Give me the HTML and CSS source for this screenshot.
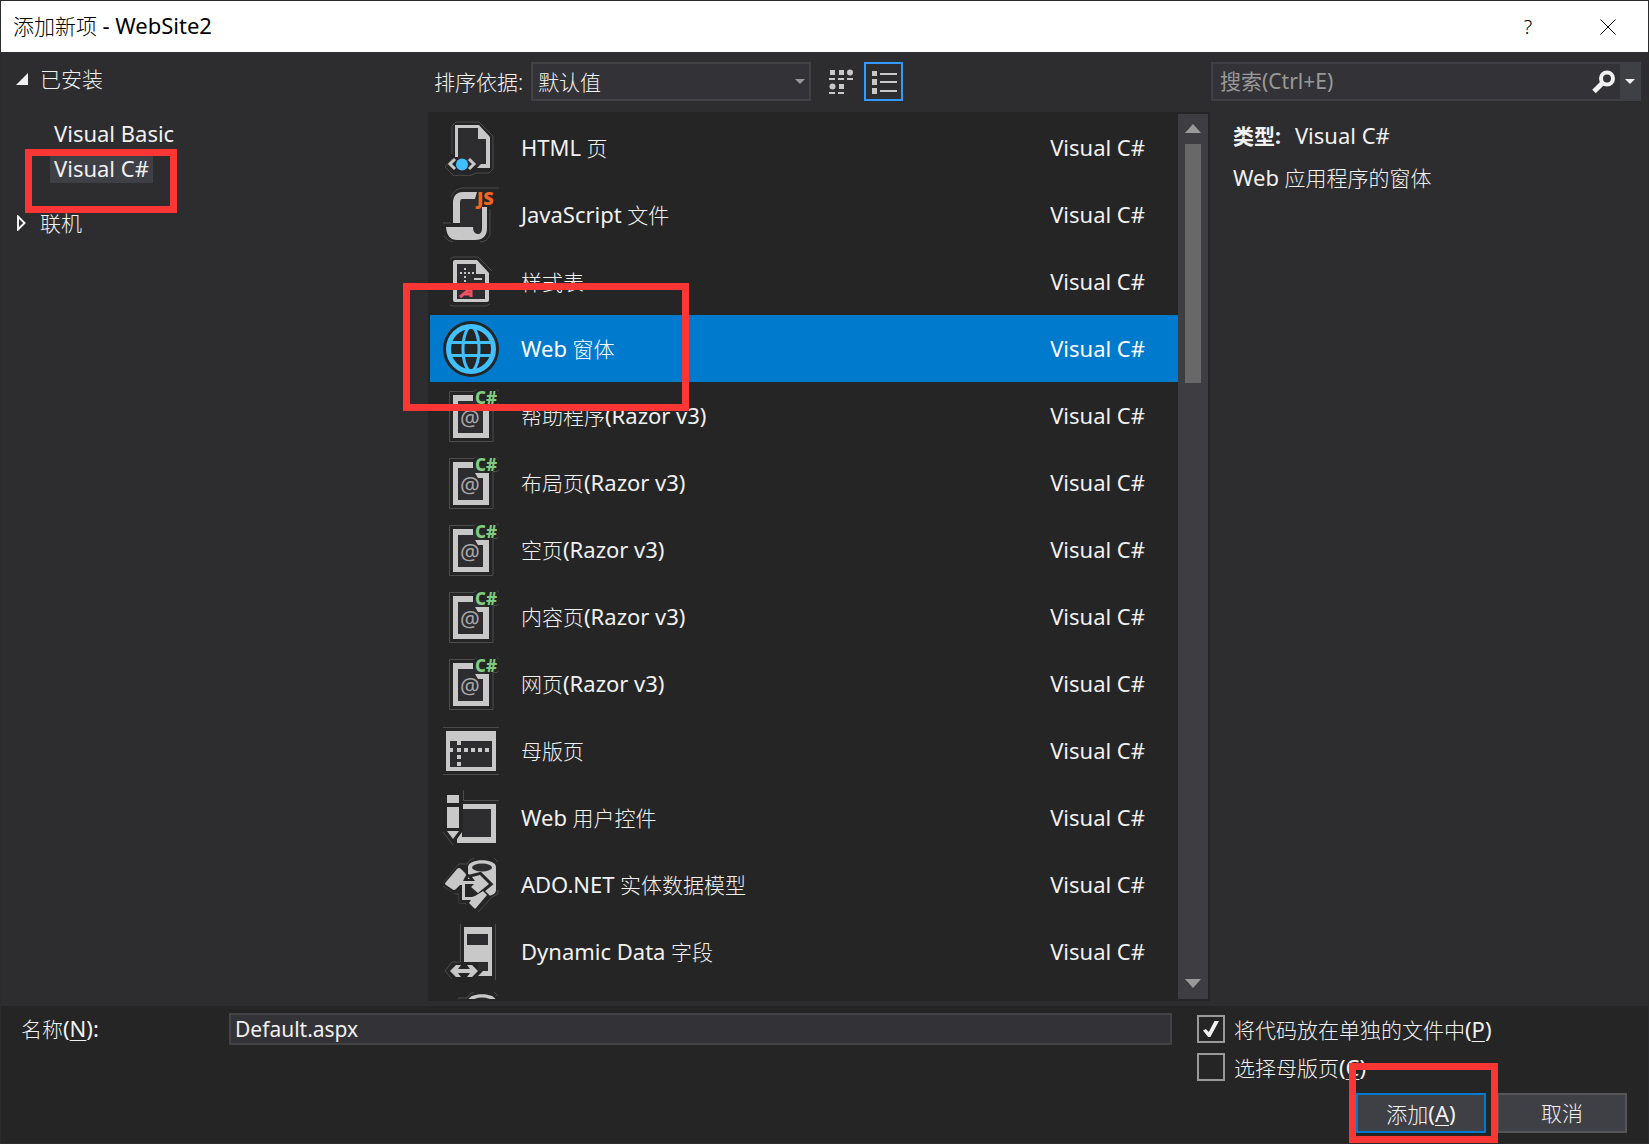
FILE: index.html
```html
<!DOCTYPE html>
<html lang="zh-CN">
<head>
<meta charset="utf-8">
<title>添加新项 - WebSite2</title>
<link rel="stylesheet" href="styles.css">
</head>
<body>
<svg class="sprite" aria-hidden="true">
  <symbol id="razor" viewBox="0 0 56 56">
    <path class="halo" d="M31 3.500H6.500v50h43.500V16.500h4l2-2M31 3.500l2-2M54 1.500l2 2"/>
    <path class="dark" d="M14 11h28v36H14z"/>
    <path class="light" d="M10 7h20v6H15v32h25V23h-5l-3-5h14v32H10z"/>
    <text class="at" x="17" y="38">@</text>
    <text class="cs" x="32" y="16">C#</text>
  </symbol>
  <symbol id="database" viewBox="0 0 56 56">
    <path class="halo" d="M0 26L16 7h8l3-4 4-2M51 1l4 4M0 29l12 8h4v9h6l9 9M35 55l14-15 6-3v-4"/>
    <path class="light" d="M25 10c0-9 28-9 28 0v23c0 4-5 6-10 6L25 22z"/>
    <ellipse class="dark" cx="39" cy="10.500" rx="10" ry="4"/>
    <g class="edge"><path d="M3 27l12-14 8 6-12 14zM19 25h12l-2-5 8-2 9 9-11 9-7-6zM19 26v17h9l12-7 4 4-12 13-5-5z"/></g>
    <path class="light" d="M3 25l11-13q2-2 4 0l4 4q2 2 0 4l-2 4h12l-3-4 4-1 4-1 9 9-11 9-7-6 3-3h-9v13h7l3-1 8-5 4 4-11 13q-1 1-2 0l-5-5 2-3h-9V28h-2l-4 4q-2 2-4 0l-6-4q-2-1 0-3z"/>
  </symbol>
</svg>
<div class="dialog">
  <header class="titlebar">
    <h1>添加新项 <span lang="en">- WebSite2</span></h1>
    <button type="button" class="caption" aria-label="帮助">?</button>
    <button type="button" class="caption" aria-label="关闭"><svg width="16" height="16" viewBox="0 0 16 16"><path d="M.5.5l15 15M15.500.5l-15 15" fill="none" stroke="#000"/></svg></button>
  </header>

  <main class="content">
    <nav class="tree">
      <button type="button" class="node" aria-expanded="true"><svg width="14" height="14" viewBox="0 0 14 14"><path d="M13 1v12H1z" fill="#f1f1f1"/></svg>已安装</button>
      <ul lang="en">
        <li><a href="#vb">Visual Basic</a></li>
        <li><a href="#cs" class="current">Visual C#</a></li>
      </ul>
      <button type="button" class="node" aria-expanded="false"><svg width="14" height="16" viewBox="0 0 14 16"><path d="M3 1.500v13L9.500 8z" fill="none" stroke="#f1f1f1" stroke-width="2"/></svg>联机</button>
      <div class="mark mark-tree"></div>
    </nav>

    <section class="templates">
      <div class="toolbar">
        <label for="sort">排序依据:</label>
        <div class="sort">
          <select id="sort"><option>默认值</option></select>
        </div>
        <button type="button" class="view" aria-label="中等图标"><svg width="24" height="26" viewBox="0 0 24 26" fill="#c8c8c8"><path d="M1 1h5v5H1zM10 1h5v5h-5zM10 15h5v5h-5zM0 9h6v2H0zM9 9h6v2H9zM18 9h6v2h-6zM0 23h6v2H0zM9 23h6v2H9z"/><circle cx="21" cy="3.500" r="3"/><circle cx="3.500" cy="17.500" r="3"/></svg></button>
        <button type="button" class="view active" aria-label="小图标"><svg width="26" height="26" viewBox="0 0 26 26" fill="#c8c8c8"><path d="M1 2h5v5H1zM1 10h5v6H1zM1 19h5v6H1zM9 4h17v2H9zM9 12h17v2H9zM9 21h17v2H9z"/></svg></button>
      </div>
      <div class="listframe">
        <ul class="list" role="listbox" aria-label="模板">
          <li role="option">
            <svg class="icon" viewBox="0 0 56 56"><path class="halo" d="M9 34V6l4-4h23l14 14v33l-4 4H33l-7 3-10-1-5 1-9-9 7-8"/><path class="dark" d="M15 8h20l10 11v27H15z"/><path class="light" d="M12 37V5h24l11 12v31H34l4-4h5V19h-8V8H15v29z"/><path d="M12 39l-5 5 5 5M26 39l5 5-5 5" fill="none" stroke="#c8c8c8" stroke-width="3"/><circle cx="19" cy="44.500" r="6" fill="#40c0ff"/></svg>
            <span class="name"><span lang="en">HTML</span> 页</span><span class="type" lang="en">Visual C#</span></li>
          <li role="option">
            <svg class="icon" viewBox="0 0 56 56"><path class="halo" d="M0 36h8M8 10q4-9 12-9h36M1 49q4 6 9 6M47 22v26q-3 7-10 7"/><path class="dark" d="M17 12h21v34H17z"/><path class="light" d="M10 36V14q1-9 10-9h14l-2 7H19q-2 0-2 4v20zM39 20h5v21q0 12-12 12H14q-10 0-11-13h27q0 7 5 7 4 0 4-6z"/><text class="js" x="34" y="18">JS</text></svg>
            <span class="name"><span lang="en">JavaScript</span> 文件</span><span class="type" lang="en">Visual C#</span></li>
          <li role="option">
            <svg class="icon" viewBox="0 0 56 56"><path class="halo" d="M7 5l3-2h25l14 14M7 51l3 1h33l4-2"/><path class="light" d="M12 6h22l12 13v27q0 2-2 2H12q-2 0-2-2V8q0-2 2-2z"/><path class="dark" d="M14 10h19v10h9v25H14z"/><path class="light" d="M21 14h2v2h-2zM21 22h2v2h-2zM21 26h2v2h-2zM21 30h2v2h-2zM17 18h2v2h-2zM21 18h2v2h-2zM25 18h2v2h-2zM29 18h2v2h-2zM31 24h8v2h-8zM29 29h10v2H29z"/><path d="M17 43l11-9v9M21 40h7" fill="none" stroke="#f05060" stroke-width="3"/></svg>
            <span class="name">样式表</span><span class="type" lang="en">Visual C#</span></li>
          <li role="option" aria-selected="true">
            <svg class="icon" viewBox="0 0 56 56"><circle cx="28" cy="28" r="28" fill="#252526"/><g fill="none" stroke="#40c0ff" stroke-width="3"><circle cx="28" cy="28" r="22.500" stroke-width="5"/><ellipse cx="28" cy="28" rx="8" ry="22"/><path d="M7 21.500h42M7 34.500h42"/></g></svg>
            <span class="name"><span lang="en">Web</span> 窗体</span><span class="type" lang="en">Visual C#</span></li>
          <li role="option"><svg class="icon"><use href="#razor"/></svg><span class="name">帮助程序<span lang="en">(Razor v3)</span></span><span class="type" lang="en">Visual C#</span></li>
          <li role="option"><svg class="icon"><use href="#razor"/></svg><span class="name">布局页<span lang="en">(Razor v3)</span></span><span class="type" lang="en">Visual C#</span></li>
          <li role="option"><svg class="icon"><use href="#razor"/></svg><span class="name">空页<span lang="en">(Razor v3)</span></span><span class="type" lang="en">Visual C#</span></li>
          <li role="option"><svg class="icon"><use href="#razor"/></svg><span class="name">内容页<span lang="en">(Razor v3)</span></span><span class="type" lang="en">Visual C#</span></li>
          <li role="option"><svg class="icon"><use href="#razor"/></svg><span class="name">网页<span lang="en">(Razor v3)</span></span><span class="type" lang="en">Visual C#</span></li>
          <li role="option">
            <svg class="icon" viewBox="0 0 56 56"><path class="halo" d="M0 4.500h56M0 51.500h56"/><path class="light" d="M3 8h50v40H3z"/><path class="dark" d="M7 18h42v26H7z"/><path class="light" d="M14 18h4v4h-4zM7 25h3v4H7zM14 25h4v4h-4zM21 25h4v4h-4zM28 25h4v4h-4zM35 25h4v4h-4zM42 25h4v4h-4zM14 32h4v4h-4zM14 39h4v4h-4z"/></svg>
            <span class="name">母版页</span><span class="type" lang="en">Visual C#</span></li>
          <li role="option">
            <svg class="icon" viewBox="0 0 56 56"><path class="halo" d="M20.500 0v10.500H56M0 42l10 13"/><path class="dark" d="M20 19h28v28H20z"/><path class="light" d="M4 5h12v8H4zM4 17h12v21H4zM4 41h12l-6 8zM20 14h33v39H14v-4l5-7v5h29V19H20z"/></svg>
            <span class="name"><span lang="en">Web</span> 用户控件</span><span class="type" lang="en">Visual C#</span></li>
          <li role="option"><svg class="icon"><use href="#database"/></svg><span class="name"><span lang="en">ADO.NET</span> 实体数据模型</span><span class="type" lang="en">Visual C#</span></li>
          <li role="option">
            <svg class="icon" viewBox="0 0 56 56"><path class="halo" d="M17.500 0v38H9l-7 9 7 8M52.500 0v56"/><path class="light" d="M21 3h28v49H35l5-5h5v-9H21z"/><path class="dark" d="M24 10h21v11H24zM35 39h10v8H35z"/><path class="light" d="M7 47l6-6h5l-3 4h12l-3-4h5l6 6-6 6h-5l3-4H15l3 4h-5z"/></svg>
            <span class="name"><span lang="en">Dynamic Data</span> 字段</span><span class="type" lang="en">Visual C#</span></li>
          <li role="option"><svg class="icon"><use href="#database"/></svg></li>
        </ul>
        <div class="scrollbar">
          <button type="button" aria-label="向上滚动"><svg width="16" height="9" viewBox="0 0 16 9"><path d="M0 9l8-9 8 9z" fill="#999"/></svg></button>
          <div class="track"><div class="thumb"></div></div>
          <button type="button" aria-label="向下滚动"><svg width="16" height="9" viewBox="0 0 16 9"><path d="M0 0l8 9 8-9z" fill="#999"/></svg></button>
        </div>
      </div>
      <div class="mark mark-item"></div>
    </section>

    <aside class="details">
      <div class="search">
        <input type="search" placeholder="搜索(Ctrl+E)" aria-label="搜索">
        <button type="button" class="find" aria-label="搜索"><svg width="24" height="24" viewBox="0 0 24 24"><circle cx="15" cy="8.500" r="6" fill="none" stroke="#f1f1f1" stroke-width="4"/><path d="M10.500 13L2 21.500" stroke="#f1f1f1" stroke-width="5"/></svg></button>
        <button type="button" class="more" aria-label="搜索选项"><svg width="10" height="5" viewBox="0 0 10 5"><path d="M0 0h10L5 5z" fill="#f1f1f1"/></svg></button>
      </div>
      <p><b>类型:</b><span lang="en">Visual C#</span></p>
      <p><span lang="en">Web</span> 应用程序的窗体</p>
    </aside>
  </main>

  <footer class="footer">
    <label class="namelabel" for="name">名称<span lang="en">(<u>N</u>):</span></label>
    <input class="namebox" id="name" type="text" value="Default.aspx">
    <div class="options">
      <label><input type="checkbox" checked><span>将代码放在单独的文件中<span lang="en">(<u>P</u>)</span></span></label>
      <label><input type="checkbox"><span>选择母版页<span lang="en">(<u>C</u>)</span></span></label>
      <div class="actions">
        <button type="submit" class="primary">添加<span lang="en">(<u>A</u>)</span></button>
        <button type="button">取消</button>
      </div>
    </div>
    <div class="mark mark-add"></div>
  </footer>
</div>
</body>
</html>
```

FILE: styles.css
```css
* { box-sizing: border-box; }

body {
  margin: 0;
  background: #252526;
  color: #f1f1f1;
  font: 300 21px/30px "Noto Sans", "Noto Sans CJK SC", sans-serif;
}

button, input, select {
  margin: 0;
  padding: 0;
  border: 0;
  border-radius: 0;
  background: none;
  color: inherit;
  font: inherit;
}

[lang="en"] { font-size: 22px; font-weight: 400; }

ul { margin: 0; padding: 0; list-style: none; }
a { color: inherit; text-decoration: none; }
svg { display: block; flex: none; }
u { text-underline-offset: 3px; text-decoration-thickness: 1px; }
.sprite { display: none; }

.dialog {
  display: flex;
  flex-direction: column;
  height: 100vh;
  min-height: 600px;
  border: 1px solid #2b2b2e;
  overflow: hidden;
}

/* title bar */
.titlebar {
  display: flex;
  align-items: center;
  height: 51px;
  padding-left: 12px;
  background: #fff;
  color: #000;
}
.titlebar h1 { flex: 1; margin: 0; padding-bottom: 2px; font-size: 21px; font-weight: 300; }
.caption { display: grid; place-items: center; width: 80px; height: 51px; font-size: 20px; }

/* main area */
.content {
  flex: 1;
  display: grid;
  grid-template-columns: 427px 1fr 438px;
  min-height: 0;
  background: #2d2d30;
}

/* category tree */
.tree { position: relative; padding-top: 12px; }
.node { display: flex; align-items: center; gap: 11px; height: 30px; padding-left: 14px; }
.tree ul { padding: 24px 0 20px 49px; }
.tree li { height: 35px; }
.tree li a { display: inline-block; padding: 0 4px; }
.tree .current { background: #3f3f46; }

/* template list */
.templates { position: relative; display: flex; flex-direction: column; min-height: 0; padding-bottom: 5px; }
.toolbar { display: flex; align-items: center; padding: 10px 0 11px 6px; }
.sort { position: relative; width: 280px; margin-left: 8px; }
.sort select {
  display: block;
  appearance: none;
  width: 100%;
  height: 39px;
  padding: 0 5px;
  border: 2px solid #434346;
  background: #333337;
}
.sort::after {
  content: "";
  position: absolute;
  right: 6px;
  top: 17px;
  border: 5px solid transparent;
  border-top-color: #999;
  border-bottom: 0;
}
.view { display: grid; place-items: center; width: 39px; height: 39px; margin-left: 10px; }
.view.active { margin-left: 4px; border: 2px solid #39f; }

.listframe { flex: 1; display: flex; min-height: 0; padding: 2px; background: #252526; }
.list { flex: 1; overflow: hidden; }
.list li { display: flex; align-items: center; height: 67px; padding: 0 33px 0 13px; }
.list [aria-selected] { background: #007acc; color: #fff; }
.icon { width: 56px; height: 56px; margin-right: 22px; }
.name { flex: 1; }
.type { padding-bottom: 2px; }

.halo { fill: none; stroke: #4c4c4e; }
.light { fill: #c8c8c8; }
.dark { fill: #2d2d30; }
.edge { fill: #252526; stroke: #252526; stroke-width: 6px; }
.at { fill: #a8a8a8; font: 400 22px "Noto Sans", sans-serif; }
.cs { fill: #80cc80; font: 800 17px "Noto Sans", sans-serif; }
.js { fill: #f26522; font: 900 18px "Noto Sans", sans-serif; }

.scrollbar { display: flex; flex-direction: column; width: 30px; background: #3e3e42; }
.scrollbar button { display: grid; place-items: center; height: 30px; padding-bottom: 2px; }
.track { flex: 1; padding: 0 7px; }
.thumb { height: 29%; background: #686868; }

/* details pane */
.details { padding: 10px 7px 0 1px; }
.search { display: flex; height: 39px; margin-bottom: 19px; border: 2px solid #3f3f46; background: #333337; }
.search input { flex: 1; min-width: 0; padding: 0 0 2px 7px; outline: 0; font-weight: 400; }
.search input::placeholder { color: #999; opacity: 1; }
.find { display: grid; place-items: center; width: 32px; }
.more { display: grid; place-items: center; width: 19px; background: #3f3f46; }
.details p { margin: 0 0 11px 22px; }
.details b { margin-right: 14px; font-weight: 700; }

/* footer */
.footer {
  position: relative;
  display: grid;
  grid-template-columns: 228px 1fr 476px;
  align-items: start;
  padding: 7px 0 10px;
  background: #252526;
}
.namelabel { padding-left: 20px; }
.namebox { height: 32px; padding: 0 4px; border: 2px solid #434346; background: #333337; font-weight: 400; }
.options { display: grid; gap: 8px; padding: 1px 21px 0 25px; }
.options label { display: flex; align-items: center; gap: 9px; height: 30px; }
.options input {
  appearance: none;
  display: grid;
  place-items: center;
  width: 28px;
  height: 28px;
  border: 2px solid #999;
}
.options input:checked::before {
  content: "";
  width: 16px;
  height: 16px;
  background: #f1f1f1;
  clip-path: polygon(0 60%, 18% 50%, 36% 68%, 72% 0, 100% 0, 46% 100%, 32% 100%);
}
.actions { display: flex; justify-content: flex-end; gap: 11px; padding-top: 3px; }
.actions button { width: 130px; height: 40px; border: 2px solid #555; background: #3f3f46; }
.actions .primary { border-color: #007acc; }

/* red highlight frames laid over the dialog */
.mark { position: absolute; border: 7px solid #fc3535; pointer-events: none; }
.mark-tree { left: 24px; top: 97px; width: 152px; height: 64px; }
.mark-item { left: -25px; top: 231px; width: 286px; height: 128px; }
.mark-add { right: 150px; bottom: 0; width: 149px; height: 80px; }
```
